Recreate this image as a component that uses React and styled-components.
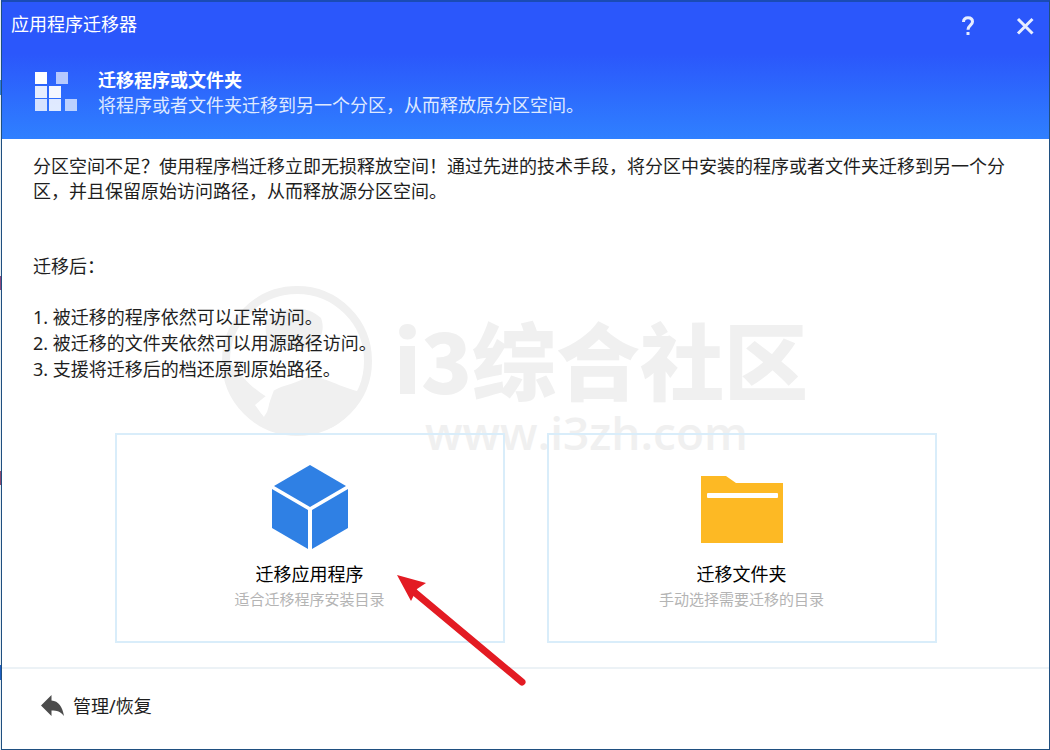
import React from 'react';
import styled, { createGlobalStyle } from 'styled-components';

const GlobalStyle = createGlobalStyle`
  * {
    box-sizing: border-box;
  }

  /* desktop behind the window, only its left edge shows */
  body {
    margin: 0;
    background: linear-gradient(
      #e6eef2 80px, #2f80d8 80px, #2f80d8 95px,
      #e6eef2 95px, #e6eef2 276px, #8a4a80 276px, #8a4a80 290px,
      #e6eef2 290px, #e6eef2 471px, #8a4a70 471px, #8a4a70 485px,
      #e6eef2 485px, #e6eef2 665px, #1f5fc0 665px, #1f5fc0 680px,
      #e6eef2 680px
    );
    font-family: 'Noto Sans', 'Noto Sans CJK SC', sans-serif;
    font-size: 18px;
    line-height: 25px;
    color: #1e1e1e;
  }

  button {
    font: inherit;
    color: inherit;
    background: none;
    border: none;
    padding: 0;
    cursor: pointer;
  }
`;

const Window = styled.div`
  position: relative;
  isolation: isolate;
  display: flex;
  flex-direction: column;
  min-height: 100vh;
  margin-left: 1px;
  background: white;
  border: 1px solid #1f4f80;
  border-top: 2px solid #1a4bb5;
`;

const Header = styled.header`
  height: 137px;
  color: white;
  background: linear-gradient(#2b57fb 0%, #2b57fb 38%, #2f80ff 100%);
`;

const TitleBar = styled.div`
  height: 48px;
  display: flex;
  align-items: center;
  justify-content: space-between;
  padding: 0 12px 4px 9px;
`;

const WindowTitle = styled.h1`
  margin: 0;
  font-size: 18px;
  font-weight: 400;
`;

const WindowButtons = styled.div`
  display: flex;
  gap: 33px;
  padding-top: 4px;
`;

const WindowButton = styled.button`
  width: 24px;
  height: 24px;
  color: #e6edff;

  svg {
    display: block;
  }
`;

const Intro = styled.div`
  display: flex;
  align-items: flex-start;
  gap: 20px;
  padding: 18px 33px 0;

  svg {
    flex-shrink: 0;
    margin-top: 4px;
  }
`;

const IntroTitle = styled.h2`
  margin: 0;
  font-size: 18px;
  font-weight: 700;
`;

const IntroText = styled.p`
  margin: 0;
  color: #dfe9ff;
`;

const Content = styled.main`
  flex: 1;
  padding: 15px 31px 20px;
`;

const Paragraph = styled.p`
  margin: 0 0 ${props => props.$gap}px;
  padding-right: 12px;
`;

const ResultList = styled.ol`
  margin: 0 0 51px;
  padding: 0;
  line-height: 26px;
  list-style-position: inside;
`;

const Options = styled.div`
  display: grid;
  grid-template-columns: repeat(2, minmax(0, 390px));
  justify-content: center;
  gap: 42px;
`;

const OptionCard = styled.button`
  height: 210px;
  display: flex;
  flex-direction: column;
  align-items: center;
  padding-top: 29px;
  border: 2px solid #d9edfa;
`;

const OptionTitle = styled.span`
  margin-top: 12px;
  color: black;
`;

const OptionHint = styled.span`
  font-size: 15px;
  color: #b4b4b4;
`;

const Footer = styled.footer`
  height: 82px;
  display: flex;
  align-items: center;
  padding: 0 39px 6px;
  border-top: 2px solid #ecf2f6;
`;

const ManageButton = styled.button`
  display: flex;
  align-items: center;
  gap: 8px;
`;

const Watermark = styled.div`
  position: absolute;
  z-index: -1;
  left: 218px;
  top: 282px;
  display: flex;
  gap: 20px;
  color: #f0f0f0;
  white-space: nowrap;
`;

const WatermarkName = styled.div`
  margin-top: 32px;
  font-family: 'Noto Sans CJK SC', sans-serif;
  font-size: 84px;
  font-weight: 900;
  line-height: 84px;
`;

const WatermarkUrl = styled.div`
  margin-top: 2px;
  padding-left: 31px;
  font-family: 'Open Sans', sans-serif;
  font-size: 46px;
  font-weight: 600;
  line-height: 60px;
`;

const Pointer = styled.svg`
  position: absolute;
  left: 393px;
  top: 569px;
  pointer-events: none;
`;

const HelpIcon = () => (
  <svg width="24" height="24" viewBox="0 0 24 24" fill="none" stroke="currentColor" strokeWidth="3">
    <path d="M7.5 8C7.5 5.2 9.2 3.8 12 3.8S16.5 5.4 16.5 7.8C16.5 11 12 11.4 12 15.8" />
    <path d="M12 18V21" />
  </svg>
);

const CloseIcon = () => (
  <svg width="24" height="24" viewBox="0 0 24 24" fill="none" stroke="currentColor" strokeWidth="3">
    <path d="M5 5L19.5 19.5M19.5 5L5 19.5" />
  </svg>
);

const BlocksIcon = () => (
  <svg width="43" height="40" viewBox="0 0 43 40" fill="white">
    <rect width="12" height="12" />
    <rect x="21" width="12" height="12" opacity="0.65" />
    <rect y="14" width="12" height="12" opacity="0.88" />
    <rect x="14" y="14" width="12" height="12" opacity="0.95" />
    <rect y="27" width="12" height="12" opacity="0.8" />
    <rect x="14" y="27" width="12" height="12" opacity="0.85" />
    <rect x="30" y="27" width="12" height="12" opacity="0.68" />
  </svg>
);

const CubeIcon = () => (
  <svg width="76" height="86" viewBox="0 0 76 86" fill="#2f80e4">
    <path d="M38 1L74 22L38 43L2 22Z" />
    <path d="M0 25L36 46V85L0 64Z" />
    <path d="M76 25L40 46V85L76 64Z" />
  </svg>
);

const FolderIcon = () => (
  <svg width="82" height="86" viewBox="0 0 82 86">
    <path d="M0 12H25L35 19H82V79H0Z" fill="#fdb924" />
    <rect x="6" y="29" width="71" height="5" rx="1" fill="white" />
  </svg>
);

const ReplyIcon = () => (
  <svg width="24" height="22" viewBox="0 0 24 22" fill="#4c4c4c">
    <path d="M0 10.5L10.5 0V5.5C17.5 6 21.5 12 23 21C19.500 16.500 16 15.500 10.500 15.500V21Z" />
  </svg>
);

const WatermarkLogo = () => (
  <svg width="154" height="154" viewBox="0 0 154 154" fill="#f0f0f0">
    <circle cx="77" cy="77" r="71" fill="none" stroke="#f0f0f0" strokeWidth="8" />
    <path d="M46 38C56 24 84 18 101 34C104 42 103 50 98 57C92 68 72 65 60 62C48 60 44 51 46 38Z" />
    <path d="M8 76C22 92 30 103 47 113C34 118 37 126 44 132C50 127 48 117 53 107C62 101 80 99 87 92C105 92 120 104 142 108C130 137 108 151 77 151C42 150 9 121 8 76Z" />
    <path d="M35 121L44 133L54 106L47 111Z" fill="white" />
  </svg>
);

const results = [
  '被迁移的程序依然可以正常访问。',
  '被迁移的文件夹依然可以用源路径访问。',
  '支援将迁移后的档还原到原始路径。',
];

const options = [
  { title: '迁移应用程序', hint: '适合迁移程序安装目录', Icon: CubeIcon },
  { title: '迁移文件夹', hint: '手动选择需要迁移的目录', Icon: FolderIcon },
];

export default function App() {
  return (
    <>
      <GlobalStyle />
      <Window>
        <Header>
          <TitleBar>
            <WindowTitle>应用程序迁移器</WindowTitle>
            <WindowButtons>
              <WindowButton aria-label="帮助">
                <HelpIcon />
              </WindowButton>
              <WindowButton aria-label="关闭">
                <CloseIcon />
              </WindowButton>
            </WindowButtons>
          </TitleBar>
          <Intro>
            <BlocksIcon />
            <div>
              <IntroTitle>迁移程序或文件夹</IntroTitle>
              <IntroText>将程序或者文件夹迁移到另一个分区，从而释放原分区空间。</IntroText>
            </div>
          </Intro>
        </Header>

        <Content>
          <Paragraph $gap={50}>
            分区空间不足？使用程序档迁移立即无损释放空间！通过先进的技术手段，将分区中安装的程序或者文件夹迁移到另一个分区，并且保留原始访问路径，从而释放源分区空间。
          </Paragraph>
          <Paragraph $gap={25}>迁移后：</Paragraph>
          <ResultList>
            {results.map(text => (
              <li key={text}>{text}</li>
            ))}
          </ResultList>
          <Options>
            {options.map(({ title, hint, Icon }) => (
              <OptionCard key={title}>
                <Icon />
                <OptionTitle>{title}</OptionTitle>
                <OptionHint>{hint}</OptionHint>
              </OptionCard>
            ))}
          </Options>
        </Content>

        <Footer>
          <ManageButton>
            <ReplyIcon />
            管理/恢复
          </ManageButton>
        </Footer>

        <Watermark>
          <WatermarkLogo />
          <div>
            <WatermarkName>i3综合社区</WatermarkName>
            <WatermarkUrl>www.i3zh.com</WatermarkUrl>
          </div>
        </Watermark>

        <Pointer width="136" height="118" viewBox="0 0 136 118">
          <path d="M18 20L127 111" stroke="#e31b23" strokeWidth="7" strokeLinecap="round" />
          <path d="M2 4L31 12L22 18L16 30Z" fill="#e31b23" />
        </Pointer>
      </Window>
    </>
  );
}
